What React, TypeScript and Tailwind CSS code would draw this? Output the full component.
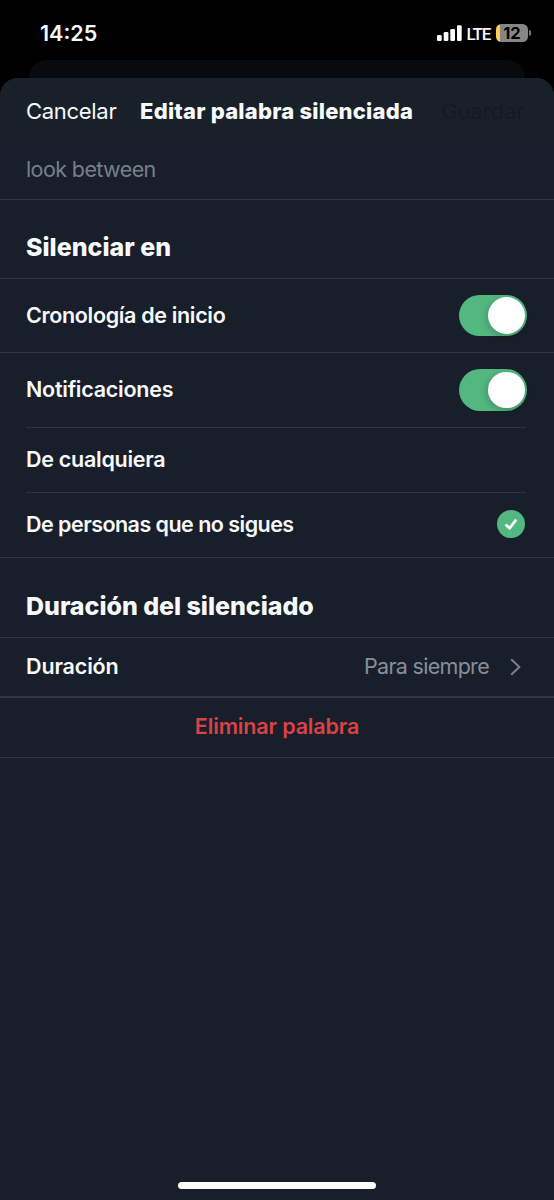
import React from 'react';

function StatusBar() {
  return (
    <header className="flex h-[60px] shrink-0 items-start justify-between pl-[40px] pr-[23px] pt-[20px]">
      <time className="text-[21.5px] font-semibold leading-[26px]">14:25</time>
      <div className="flex h-[26px] items-center">
        <svg width="25" height="16" viewBox="0 0 25 16" fill="#fff" aria-hidden="true">
          <rect x="0" y="10" width="4.7" height="6" rx="1.3" />
          <rect x="6.7" y="7" width="4.7" height="9" rx="1.3" />
          <rect x="13.3" y="4" width="4.7" height="12" rx="1.3" />
          <rect x="20" y="0.3" width="4.7" height="15.7" rx="1.3" />
        </svg>
        <span className="ml-[4.5px] w-[24px] pt-px font-['Roboto',sans-serif] text-[17px] font-medium leading-[24px] tracking-[-1.1px]">LTE</span>
        <div className="ml-[5.5px] flex h-[18px] w-[32px] items-center justify-center overflow-hidden rounded-[5.5px] bg-[linear-gradient(90deg,#f7d154_4px,#868686_4px)]">
          <span className="text-[16.5px] font-bold leading-[18px] text-black">12</span>
        </div>
        <div className="ml-[1px] h-[6px] w-[2px] rounded-r-full bg-[#77777a]" />
      </div>
    </header>
  );
}

function Toggle() {
  return (
    <button role="switch" aria-checked="true" className="flex h-[41.5px] w-[68px] items-center justify-end rounded-full bg-[#53b780] pr-[2.5px]">
      <span className="size-[36.5px] rounded-full bg-white shadow-[-1px_2px_7px_rgba(0,0,0,0.22)]" />
    </button>
  );
}

export default function App() {
  return (
    <div className="flex h-[1200px] w-[554px] flex-col overflow-hidden bg-black font-['Inter',sans-serif] text-[#f7f9fb]">
      <StatusBar />
      <div className="mx-[29px] h-[18px] shrink-0 rounded-t-[22px] bg-[#070b0f]" />
      <main className="flex flex-1 flex-col rounded-t-[18px] bg-[#181f2a] text-[21.5px] font-semibold">
        <div className="flex h-[66px] shrink-0 items-center rounded-t-[18px] bg-[#18212a] px-[26px] pb-px leading-[26px]">
          <button className="w-[114px] text-left text-[22px] font-normal tracking-[-0.3px]">Cancelar</button>
          <h1 className="w-[301px] whitespace-nowrap text-[22px] font-extrabold tracking-[0.22px]">Editar palabra silenciada</h1>
          <button className="text-[22px] font-normal text-[#121a23]">Guardar</button>
        </div>
        <div className="flex h-[56px] shrink-0 items-center border-b border-[#2f3641] px-[26px] pb-[4px] font-normal tracking-[-0.6px] text-[#777e8d]">look between</div>
        <h2 className="flex h-[79px] shrink-0 items-center border-b border-[#2f3641] px-[26px] pt-[18px] text-[25px] font-extrabold">Silenciar en</h2>
        <div className="flex h-[74px] shrink-0 items-center justify-between border-b border-[#2f3641] pl-[26px] pr-[27px]">
          <span className="tracking-[-0.33px]">Cronología de inicio</span>
          <Toggle />
        </div>
        <div className="ml-[26px] mr-[28px] flex h-[75px] shrink-0 items-center justify-between border-b border-[#2f3641]">
          <span className="pb-px tracking-[-0.25px]">Notificaciones</span>
          <div className="-mr-px"><Toggle /></div>
        </div>
        <div className="ml-[26px] mr-[28px] flex h-[65px] shrink-0 items-center border-b border-[#2f3641] pb-[2px] tracking-[-0.27px]">De cualquiera</div>
        <div className="flex h-[65px] shrink-0 items-center justify-between border-b border-[#2f3641] pb-[1.5px] pl-[26px] pr-[29px]">
          <span className="tracking-[-0.53px]">De personas que no sigues</span>
          <svg width="28" height="28" viewBox="0 0 28 28" fill="none" aria-hidden="true">
            <circle cx="14" cy="14" r="14" fill="#53b780" />
            <path d="M8.6 14.6 12.6 18.2 19.2 9.6" stroke="#fff" strokeWidth="2.7" />
          </svg>
        </div>
        <h2 className="flex h-[80px] shrink-0 items-center border-b border-[#2f3641] px-[26px] pt-[18px] text-[25px] font-extrabold tracking-[-0.03px]">Duración del silenciado</h2>
        <div className="flex h-[60px] shrink-0 items-center border-b-2 border-[#2f3641] pb-px pl-[26px] pr-[33px]">
          <span className="tracking-[-0.15px]">Duración</span>
          <span className="ml-auto font-normal tracking-[-0.7px] text-[#878e9c]">Para siempre</span>
          <svg className="ml-[21px]" width="11" height="18" viewBox="0 0 11 18" fill="none" aria-hidden="true">
            <path d="M1.2 1.2 9.4 9 1.2 16.8" stroke="#7b8290" strokeWidth="1.9" />
          </svg>
        </div>
        <button className="flex h-[60px] shrink-0 items-center justify-center border-b border-[#2f3641] pb-[2px] tracking-[-0.15px] text-[#dc4146]">Eliminar palabra</button>
        <div className="mb-[11px] mt-auto h-[7px] w-[198px] self-center rounded-full bg-white" />
      </main>
    </div>
  );
}
